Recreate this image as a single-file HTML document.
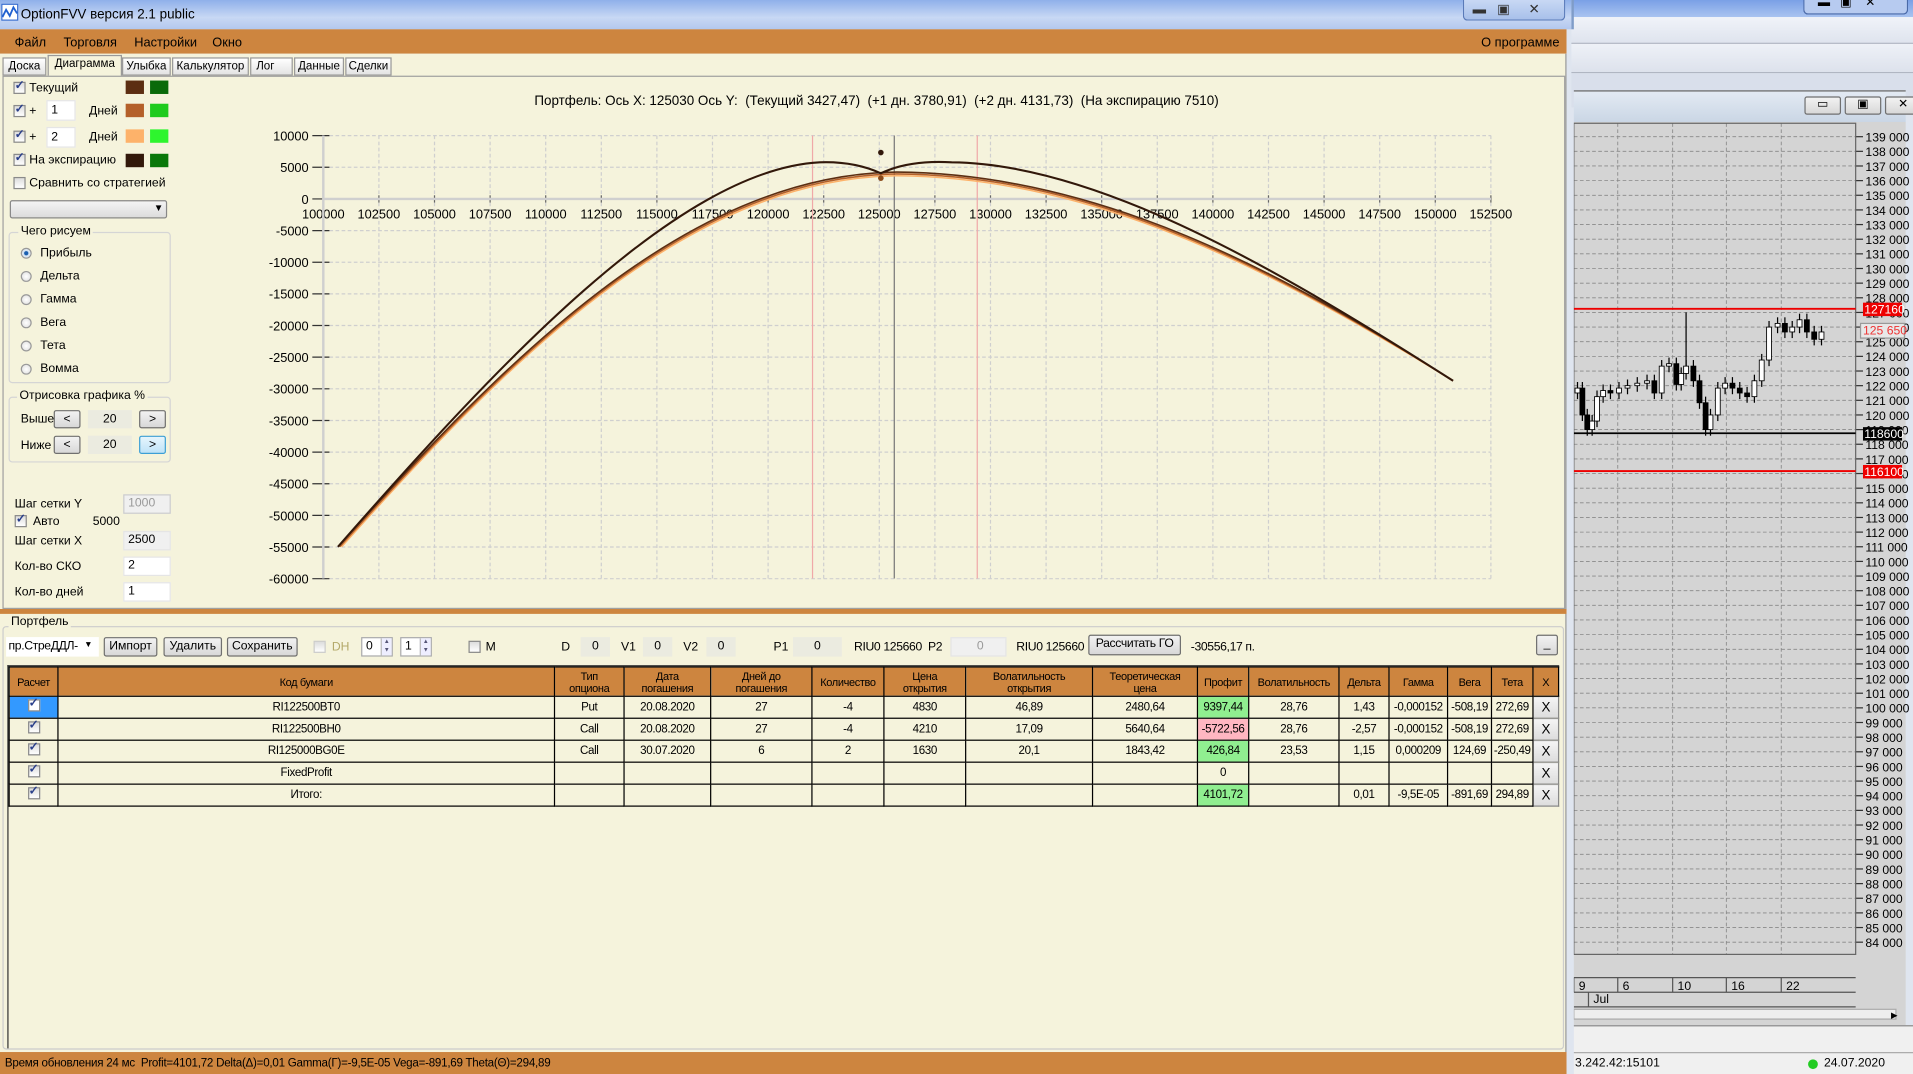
<!DOCTYPE html>
<html><head><meta charset="utf-8">
<style>
*{box-sizing:border-box;margin:0;padding:0}
html,body{width:1913px;height:1074px;overflow:hidden;background:#dfe5ef;font-family:"Liberation Sans",sans-serif}
#w{position:absolute;left:0;top:0;width:1568px;height:880px;transform:scale(1.22003,1.22045);transform-origin:0 0;font-size:10px;color:#000}
.a{position:absolute}
.t{position:absolute;white-space:nowrap}
.cb{position:absolute;width:10px;height:10px;border:1px solid #8a8a8a;background:linear-gradient(#ddd,#fff)}
.cb.c::after{content:"✓";position:absolute;left:0px;top:-3px;font-size:10px;color:#2a3f8a;font-weight:bold}
.sw{position:absolute;width:15px;height:11px}
.inp{position:absolute;background:#fff;border:1px solid #e5e5e5;padding-left:3px;line-height:14px}
.btn{position:absolute;border:1px solid #707070;border-radius:2px;background:linear-gradient(#f2f2f2,#d8d8d8);text-align:center;line-height:14px}
.rd{position:absolute;width:9px;height:9px;border-radius:50%;border:1px solid #999;background:radial-gradient(#fff,#ddd)}
.grp{position:absolute;border:1px solid #d5d5d5;border-radius:3px}
table{border-collapse:collapse;table-layout:fixed}
td{border:1px solid #000;height:18px;text-align:center;font-size:9.5px;overflow:hidden;white-space:nowrap;letter-spacing:-0.3px}
tr.h td{height:24px;background:#cd853f;line-height:10px;font-size:9px}
.g{background:#90ee90}.p{background:#ffb6c1}
.x{background:linear-gradient(#f4f4f4,#dcdcdc);border:1px solid #888;font-size:11px}
.spn{position:absolute;width:9px;height:14px;border-left:1px solid #bbb;font-size:5px;line-height:7px;text-align:center;color:#557;background:#eef}
</style></head><body>
<div id="w">
<!-- right background app -->
<div class="a" style="left:1288px;top:0;width:280px;height:14px;background:linear-gradient(#7aa0e6,#a9c3f0)"></div>
<div class="a" style="left:1478px;top:0;width:86px;height:12px;border:1px solid #4a6aa8;border-top:0;border-radius:0 0 4px 4px;background:#b7cbf0"></div>
<div class="t" style="left:1490px;top:-3px;font-size:10px">▬ &nbsp; ▣ &nbsp;&nbsp; ✕</div>
<div class="a" style="left:1288px;top:14px;width:280px;height:22px;background:linear-gradient(#f0f3f9,#dfe4ee);border-bottom:1px solid #b0b6c2"></div>
<div class="a" style="left:1288px;top:36px;width:280px;height:24px;background:linear-gradient(#eef1f7,#dde2ec);border-bottom:1px solid #b0b6c2"></div>
<div class="a" style="left:1288px;top:60px;width:280px;height:28px;background:#d9dfeb"></div>
<div class="a" style="left:1290px;top:74px;width:272px;height:26px;background:linear-gradient(#e3eaf3,#cad6e5);border-top:1px solid #666"></div>
<div class="btn" style="left:1479px;top:79px;width:30px;height:15px;line-height:12px">▭</div>
<div class="btn" style="left:1512px;top:79px;width:30px;height:15px;line-height:12px">▣</div>
<div class="btn" style="left:1545px;top:79px;width:30px;height:15px;line-height:12px">✕</div>
<div class="a" style="left:1290px;top:100px;width:272px;height:740px;background:#d4d4d4"></div>
<div class="a" style="left:1290px;top:840px;width:278px;height:22px;background:#f0f0f0;border-top:1px solid #888"></div>
<div class="a" style="left:1290px;top:862px;width:278px;height:18px;background:#f0f0f0;border-top:1px solid #aaa"></div>
<div class="t" style="left:1291px;top:866px;font-size:10px">3.242.42:15101</div>
<div class="a" style="left:1482px;top:868px;width:8px;height:8px;border-radius:50%;background:#22cc22"></div>
<div class="t" style="left:1495px;top:866px;font-size:10px">24.07.2020</div>
<svg class="a" style="left:1290px;top:100px" width="278" height="740" viewBox="1290 100 278 740" id="rc"></svg>

<!-- main window -->
<div class="a" style="left:0;top:0;width:1290px;height:24px;background:linear-gradient(#8fb0ea,#c8d8f4 60%,#b3c8ee);border-right:2px solid #7f9cc8"></div>
<div class="a" style="left:1px;top:3px;width:14px;height:14px;background:#fff;border:1px solid #3a6fd0"></div>
<svg class="a" style="left:1px;top:3px" width="15" height="15"><path d="M1 11 L4 5 L7 10 L10 3 L13 8" stroke="#2060d0" fill="none" stroke-width="1.5"/></svg>
<div class="t" style="left:17px;top:6px;font-size:11px">OptionFVV версия 2.1 public</div>
<div class="a" style="left:1199px;top:0;width:84px;height:17px;border:1px solid #5a7ab8;border-top:0;border-radius:0 0 4px 4px;background:linear-gradient(#c8d8f4,#a8c0ea)"></div>
<div class="t" style="left:1207px;top:1px;font-size:11px;color:#333">▬ &nbsp; ▣ &nbsp;&nbsp;&nbsp; ✕</div>
<div class="a" style="left:0;top:24px;width:1284px;height:20px;background:#cd853f"></div>
<div class="t" style="left:12px;top:29px;font-size:10.5px">Файл</div>
<div class="t" style="left:52px;top:29px;font-size:10.5px">Торговля</div>
<div class="t" style="left:110px;top:29px;font-size:10.5px">Настройки</div>
<div class="t" style="left:174px;top:29px;font-size:10.5px">Окно</div>
<div class="t" style="left:1214px;top:29px;font-size:10.5px">О программе</div>
<div class="a" style="left:0;top:44px;width:1284px;height:818px;background:#f5f3dc;border-right:1px solid #999"></div>
<!-- tabs -->
<div class="a" style="left:2px;top:47px;width:316px;height:15px;font-size:9.5px">
<div class="t" style="left:0;top:0;width:36px;height:15px;border:1px solid #999;background:linear-gradient(#fff,#e3e3e3);text-align:center;line-height:14px">Доска</div>
<div class="t" style="left:37px;top:-2px;width:61px;height:17px;border:1px solid #999;border-bottom:0;background:#f5f3dc;text-align:center;line-height:14px">Диаграмма</div>
<div class="t" style="left:98px;top:0;width:40px;height:15px;border:1px solid #999;background:linear-gradient(#fff,#e3e3e3);text-align:center;line-height:14px">Улыбка</div>
<div class="t" style="left:139px;top:0;width:63px;height:15px;border:1px solid #999;background:linear-gradient(#fff,#e3e3e3);text-align:center;line-height:14px">Калькулятор</div>
<div class="t" style="left:203px;top:0;width:35px;height:15px;border:1px solid #999;background:linear-gradient(#fff,#e3e3e3);padding-left:4px;line-height:14px">Лог</div>
<div class="t" style="left:239px;top:0;width:41px;height:15px;border:1px solid #999;background:linear-gradient(#fff,#e3e3e3);text-align:center;line-height:14px">Данные</div>
<div class="t" style="left:281px;top:0;width:38px;height:15px;border:1px solid #999;background:linear-gradient(#fff,#e3e3e3);text-align:center;line-height:14px">Сделки</div>
</div>
<div class="a" style="left:2px;top:62px;width:1281px;height:437px;border:1px solid #a0a0a0"></div>
<!-- left controls -->
<div class="cb c" style="left:11px;top:67px"></div><div class="t" style="left:24px;top:67px">Текущий</div>
<div class="sw" style="left:103px;top:66px;background:#5c2e12"></div><div class="sw" style="left:123px;top:66px;background:#0a6a0a"></div>
<div class="cb c" style="left:11px;top:86px"></div><div class="t" style="left:24px;top:86px">+</div>
<div class="inp" style="left:38px;top:82px;width:24px;height:17px;line-height:16px">1</div><div class="t" style="left:73px;top:86px">Дней</div>
<div class="sw" style="left:103px;top:85px;background:#b4602a"></div><div class="sw" style="left:123px;top:85px;background:#1ecb1e"></div>
<div class="cb c" style="left:11px;top:107px"></div><div class="t" style="left:24px;top:107px">+</div>
<div class="inp" style="left:38px;top:104px;width:24px;height:17px;line-height:16px">2</div><div class="t" style="left:73px;top:107px">Дней</div>
<div class="sw" style="left:103px;top:106px;background:#fdb26a"></div><div class="sw" style="left:123px;top:106px;background:#2ef52e"></div>
<div class="cb c" style="left:11px;top:126px"></div><div class="t" style="left:24px;top:126px">На экспирацию</div>
<div class="sw" style="left:103px;top:126px;background:#32180a"></div><div class="sw" style="left:123px;top:126px;background:#0a780a"></div>
<div class="cb" style="left:11px;top:145px"></div><div class="t" style="left:24px;top:145px">Сравнить со стратегией</div>
<div class="a" style="left:8px;top:164px;width:129px;height:15px;border:1px solid #888;border-radius:2px;background:linear-gradient(#f4f4f4,#dcdcdc)"></div>
<div class="t" style="left:126px;top:166px;font-size:8px">▼</div>
<div class="grp" style="left:7px;top:190px;width:133px;height:124px"></div>
<div class="t" style="left:15px;top:184px;background:#f5f3dc;padding:0 2px">Чего рисуем</div>
<div class="rd" style="left:17px;top:203px;background:radial-gradient(#1a5fb0 30%,#cde 40%,#fff)"></div><div class="t" style="left:33px;top:202px">Прибыль</div>
<div class="rd" style="left:17px;top:222px"></div><div class="t" style="left:33px;top:221px">Дельта</div>
<div class="rd" style="left:17px;top:241px"></div><div class="t" style="left:33px;top:240px">Гамма</div>
<div class="rd" style="left:17px;top:260px"></div><div class="t" style="left:33px;top:259px">Вега</div>
<div class="rd" style="left:17px;top:279px"></div><div class="t" style="left:33px;top:278px">Тета</div>
<div class="rd" style="left:17px;top:298px"></div><div class="t" style="left:33px;top:297px">Вомма</div>
<div class="grp" style="left:7px;top:325px;width:133px;height:54px"></div>
<div class="t" style="left:14px;top:319px;background:#f5f3dc;padding:0 2px">Отрисовка графика %</div>
<div class="t" style="left:17px;top:338px">Выше</div>
<div class="btn" style="left:44px;top:336px;width:22px;height:15px">&lt;</div>
<div class="a" style="left:72px;top:336px;width:36px;height:15px;background:#ebebe0;text-align:center;line-height:15px">20</div>
<div class="btn" style="left:114px;top:336px;width:22px;height:15px">&gt;</div>
<div class="t" style="left:17px;top:360px">Ниже</div>
<div class="btn" style="left:44px;top:357px;width:22px;height:15px">&lt;</div>
<div class="a" style="left:72px;top:357px;width:36px;height:15px;background:#ebebe0;text-align:center;line-height:15px">20</div>
<div class="btn" style="left:114px;top:357px;width:22px;height:15px;border-color:#3c9fd6;background:linear-gradient(#e6f5fd,#bfe3f8)">&gt;</div>
<div class="t" style="left:12px;top:408px">Шаг сетки Y</div>
<div class="inp" style="left:101px;top:405px;width:39px;height:16px;background:#f0f0f0;color:#999;border-color:#ccc">1000</div>
<div class="cb c" style="left:12px;top:422px"></div><div class="t" style="left:27px;top:422px">Авто</div><div class="t" style="left:76px;top:422px">5000</div>
<div class="t" style="left:12px;top:438px">Шаг сетки X</div>
<div class="inp" style="left:101px;top:435px;width:39px;height:16px;background:#f0f0f0">2500</div>
<div class="t" style="left:12px;top:459px">Кол-во СКО</div>
<div class="inp" style="left:101px;top:456px;width:39px;height:16px">2</div>
<div class="t" style="left:12px;top:480px">Кол-во дней</div>
<div class="inp" style="left:101px;top:477px;width:39px;height:16px">1</div>
<!-- chart -->
<div class="t" style="left:438px;top:77px;font-size:11px">Портфель: Ось X: 125030 Ось Y:&nbsp; (Текущий 3427,47)&nbsp; (+1 дн. 3780,91)&nbsp; (+2 дн. 4131,73)&nbsp; (На экспирацию 7510)</div>
<svg class="a" style="left:0;top:0" width="1288" height="500" id="ch" font-family="Liberation Sans" font-size="10.5"></svg>
<!-- portfolio -->
<div class="a" style="left:0;top:499px;width:1284px;height:4px;background:#cd853f"></div>
<div class="grp" style="left:2px;top:513px;width:1280px;height:347px;border-color:#ccc"></div>
<div class="t" style="left:7px;top:504px;background:#f5f3dc;padding:0 2px">Портфель</div>
<div class="a" style="left:5px;top:522px;width:76px;height:16px;background:#fff;padding:2px 0 0 2px;letter-spacing:-0.3px">пр.СтреДДЛ-<span style="position:absolute;left:64px;top:3px;font-size:7px">▼</span></div>
<div class="btn" style="left:85px;top:522px;width:44px;height:16px">Импорт</div>
<div class="btn" style="left:134px;top:522px;width:48px;height:16px">Удалить</div>
<div class="btn" style="left:186px;top:522px;width:58px;height:16px">Сохранить</div>
<div class="cb" style="left:257px;top:525px;border-color:#ccc"></div><div class="t" style="left:272px;top:525px;color:#b4a96a">DH</div>
<div class="inp" style="left:296px;top:522px;width:26px;height:16px;border-color:#aaa">0<div class="spn" style="left:15px;top:0">▲<br>▼</div></div>
<div class="inp" style="left:328px;top:522px;width:26px;height:16px;border-color:#aaa">1<div class="spn" style="left:15px;top:0">▲<br>▼</div></div>
<div class="cb" style="left:384px;top:525px"></div><div class="t" style="left:398px;top:525px">M</div>
<div class="t" style="left:460px;top:525px">D</div><div class="a" style="left:476px;top:522px;width:24px;height:16px;background:#ebebe0;text-align:center;line-height:16px">0</div>
<div class="t" style="left:509px;top:525px">V1</div><div class="a" style="left:527px;top:522px;width:24px;height:16px;background:#ebebe0;text-align:center;line-height:16px">0</div>
<div class="t" style="left:560px;top:525px">V2</div><div class="a" style="left:579px;top:522px;width:24px;height:16px;background:#ebebe0;text-align:center;line-height:16px">0</div>
<div class="t" style="left:634px;top:525px">P1</div><div class="a" style="left:650px;top:522px;width:40px;height:16px;background:#ebebe0;text-align:center;line-height:16px">0</div>
<div class="t" style="left:700px;top:525px;letter-spacing:-0.3px">RIU0 125660&nbsp; P2</div>
<div class="inp" style="left:779px;top:522px;width:46px;height:16px;background:#f0f0f0;color:#999;text-align:center">0</div>
<div class="t" style="left:833px;top:525px;letter-spacing:-0.3px">RIU0 125660</div>
<div class="btn" style="left:892px;top:520px;width:76px;height:17px;letter-spacing:-0.3px">Рассчитать ГО</div>
<div class="t" style="left:976px;top:525px;letter-spacing:-0.3px">-30556,17 п.</div>
<div class="btn" style="left:1259px;top:520px;width:18px;height:17px">_</div>
<div class="a" style="left:6px;top:545px;width:1272px;height:314px;border:1px solid #333;border-bottom:0;border-right:0"></div>
<table class="a" style="left:7px;top:546px;width:1270px">
<colgroup><col style="width:40px"><col style="width:407px"><col style="width:57px"><col style="width:71px"><col style="width:83px"><col style="width:59px"><col style="width:67px"><col style="width:104px"><col style="width:86px"><col style="width:42px"><col style="width:74px"><col style="width:41px"><col style="width:48px"><col style="width:36px"><col style="width:34px"><col style="width:21px"></colgroup>
<tr class="h"><td>Расчет</td><td>Код бумаги</td><td>Тип<br>опциона</td><td>Дата<br>погашения</td><td>Дней до<br>погашения</td><td>Количество</td><td>Цена<br>открытия</td><td>Волатильность<br>открытия</td><td>Теоретическая<br>цена</td><td>Профит</td><td>Волатильность</td><td>Дельта</td><td>Гамма</td><td>Вега</td><td>Тета</td><td>X</td></tr>
<tr><td style="background:#3399ff"><span class="cb c" style="position:relative;display:inline-block;background:#fff"></span></td><td>RI122500BT0</td><td>Put</td><td>20.08.2020</td><td>27</td><td>-4</td><td>4830</td><td>46,89</td><td>2480,64</td><td class="g">9397,44</td><td>28,76</td><td>1,43</td><td>-0,000152</td><td>-508,19</td><td>272,69</td><td class="x">X</td></tr>
<tr><td><span class="cb c" style="position:relative;display:inline-block"></span></td><td>RI122500BH0</td><td>Call</td><td>20.08.2020</td><td>27</td><td>-4</td><td>4210</td><td>17,09</td><td>5640,64</td><td class="p">-5722,56</td><td>28,76</td><td>-2,57</td><td>-0,000152</td><td>-508,19</td><td>272,69</td><td class="x">X</td></tr>
<tr><td><span class="cb c" style="position:relative;display:inline-block"></span></td><td>RI125000BG0E</td><td>Call</td><td>30.07.2020</td><td>6</td><td>2</td><td>1630</td><td>20,1</td><td>1843,42</td><td class="g">426,84</td><td>23,53</td><td>1,15</td><td>0,000209</td><td>124,69</td><td>-250,49</td><td class="x">X</td></tr>
<tr><td><span class="cb c" style="position:relative;display:inline-block"></span></td><td>FixedProfit</td><td></td><td></td><td></td><td></td><td></td><td></td><td></td><td>0</td><td></td><td></td><td></td><td></td><td></td><td class="x">X</td></tr>
<tr><td><span class="cb c" style="position:relative;display:inline-block"></span></td><td>Итого:</td><td></td><td></td><td></td><td></td><td></td><td></td><td></td><td class="g">4101,72</td><td></td><td>0,01</td><td>-9,5E-05</td><td>-891,69</td><td>294,89</td><td class="x">X</td></tr>
</table>
<div class="a" style="left:0;top:862px;width:1284px;height:18px;background:#cd853f"></div>
<div class="t" style="left:4px;top:866px;font-size:9.5px;letter-spacing:-0.2px">Время обновления 24 мс&nbsp; Profit=4101,72 Delta(Δ)=0,01 Gamma(Γ)=-9,5E-05 Vega=-891,69 Theta(Θ)=294,89</div>
</div>
<script>
var ch=document.getElementById('ch'),s="";
var X0=265,X1=1222,Y0=111,Y1=474;
function px(v){return X0+(v-100000)/52500*(X1-X0)}
function py(v){return 163-(v/5000)*25.93}
for(var v=100000;v<=152500;v+=2500){var x=px(v);s+='<line x1="'+x+'" y1="'+Y0+'" x2="'+x+'" y2="'+Y1+'" stroke="#cfcfcf" stroke-dasharray="3,2"/>';s+='<line x1="'+x+'" y1="160" x2="'+x+'" y2="166" stroke="#666"/>';s+='<text x="'+x+'" y="179" text-anchor="middle">'+v+'</text>';}
for(var v=10000;v>=-60000;v-=5000){var y=py(v);s+='<line x1="'+X0+'" y1="'+y+'" x2="'+X1+'" y2="'+y+'" stroke="#cfcfcf" stroke-dasharray="3,2"/>';s+='<line x1="256" y1="'+y+'" x2="270" y2="'+y+'" stroke="#333"/>';s+='<text x="253" y="'+(y+4)+'" text-anchor="end">'+v+'</text>';}
s+='<line x1="'+X0+'" y1="163" x2="'+X1+'" y2="163" stroke="#cfcfcf" stroke-width="2"/>';
s+='<line x1="'+X0+'" y1="'+Y0+'" x2="'+X0+'" y2="'+Y1+'" stroke="#cfcfcf" stroke-width="2"/>';
s+='<line x1="666" y1="'+Y0+'" x2="666" y2="'+Y1+'" stroke="#f0a8a8"/><line x1="801" y1="'+Y0+'" x2="801" y2="'+Y1+'" stroke="#f0a8a8"/><line x1="733" y1="'+Y0+'" x2="733" y2="'+Y1+'" stroke="#777"/>';
var arc=function(d,c){return '<path d="M'+(277+d)+','+448+' C410,'+(300+d)+' 560,'+(143+d)+' 735,'+(141+d)+' C900,'+(142+d)+' 1050,'+(222+d)+' 1191,312" fill="none" stroke="'+c+'" stroke-width="1.3"/>'};
s+=arc(3,'#fdb26a')+arc(1.5,'#b4602a')+arc(0,'#5c2e12');
s+='<path d="M277,448 C405,302 555,139 672,133 Q700,132 722,142 Q745,131 780,133 C900,134 1050,222 1191,312" fill="none" stroke="#32180a" stroke-width="1.7"/>';
s+='<circle cx="722" cy="125" r="2.3" fill="#32180a"/><circle cx="722" cy="146" r="2.3" fill="#8a4a1a"/>';
ch.innerHTML=s;
var rc=document.getElementById('rc'),r="";
for(var i=0;i<56;i++){var y=112+i*12;r+='<line x1="1290" y1="'+y+'" x2="1521" y2="'+y+'" stroke="#888" stroke-dasharray="3,2" stroke-width="0.7"/><line x1="1521" y1="'+y+'" x2="1527" y2="'+y+'" stroke="#333"/><text x="1529" y="'+(y+4)+'" font-size="10" font-family="Liberation Sans">'+(139-i)+' 000</text>';}
[1326,1371,1415,1460].forEach(function(x){r+='<line x1="'+x+'" y1="101" x2="'+x+'" y2="782" stroke="#888" stroke-dasharray="3,2" stroke-width="0.7"/>'});
r+='<rect x="1290" y="101" width="231" height="681" fill="none" stroke="#666"/>';
r+='<line x1="1290" y1="253" x2="1521" y2="253" stroke="#e00" stroke-width="1.5"/><line x1="1290" y1="386" x2="1521" y2="386" stroke="#e00" stroke-width="1.5"/><line x1="1290" y1="355" x2="1521" y2="355" stroke="#000" stroke-width="1.5"/>';
var pts=[[1291,318],[1295,340],[1299,352],[1303,345],[1307,325],[1312,320],[1318,322],[1325,318],[1332,316],[1340,314],[1348,312],[1354,322],[1360,300],[1366,298],[1372,315],[1376,306],[1380,300],[1386,312],[1391,330],[1396,352],[1400,340],[1406,318],[1412,314],[1418,318],[1424,322],[1430,325],[1436,312],[1442,295],[1448,268],[1455,265],[1461,272],[1467,268],[1473,262],[1479,272],[1485,278],[1491,272]];
var py0=322;pts.forEach(function(p){var o=py0,c=p[1],lo=Math.min(o,c),hi=Math.max(o,c);r+='<line x1="'+(p[0]+2)+'" y1="'+(lo-5)+'" x2="'+(p[0]+2)+'" y2="'+(hi+5)+'" stroke="#000"/><rect x="'+p[0]+'" y="'+lo+'" width="4" height="'+Math.max(1,hi-lo)+'" fill="'+(c<o?'#fff':'#000')+'" stroke="#000" stroke-width="0.7"/>';py0=c;});
r+='<line x1="1382" y1="256" x2="1382" y2="300" stroke="#000"/>';
r+='<rect x="1527" y="248" width="32" height="11" fill="#e00"/><text x="1528" y="257" font-size="10" fill="#fff" font-family="Liberation Sans">127160</text>';
r+='<rect x="1525" y="265" width="36" height="12" fill="#e8e8e8" stroke="#999"/><text x="1527" y="274" font-size="10" fill="#e33" font-family="Liberation Sans">125 650</text>';
r+='<rect x="1527" y="350" width="32" height="11" fill="#000"/><text x="1528" y="359" font-size="10" fill="#fff" font-family="Liberation Sans">118600</text>';
r+='<rect x="1527" y="381" width="32" height="11" fill="#e00"/><text x="1528" y="390" font-size="10" fill="#fff" font-family="Liberation Sans">116100</text>';
r+='<line x1="1290" y1="801" x2="1521" y2="801" stroke="#555"/><line x1="1290" y1="813" x2="1521" y2="813" stroke="#555"/><line x1="1290" y1="825" x2="1521" y2="825" stroke="#555"/>';
[[1290,"9"],[1326,"6"],[1371,"10"],[1415,"16"],[1460,"22"]].forEach(function(a){r+='<line x1="'+a[0]+'" y1="801" x2="'+a[0]+'" y2="813" stroke="#555"/><text x="'+(a[0]+4)+'" y="811" font-size="10" font-family="Liberation Sans">'+a[1]+'</text>'});
r+='<line x1="1302" y1="813" x2="1302" y2="825" stroke="#555"/><text x="1306" y="822" font-size="10" font-family="Liberation Sans">Jul</text>';
r+='<rect x="1290" y="827" width="264" height="8" fill="#eee" stroke="#aaa"/><text x="1550" y="834" font-size="7">▶</text>';
rc.innerHTML=r;
</script>
</body></html>
